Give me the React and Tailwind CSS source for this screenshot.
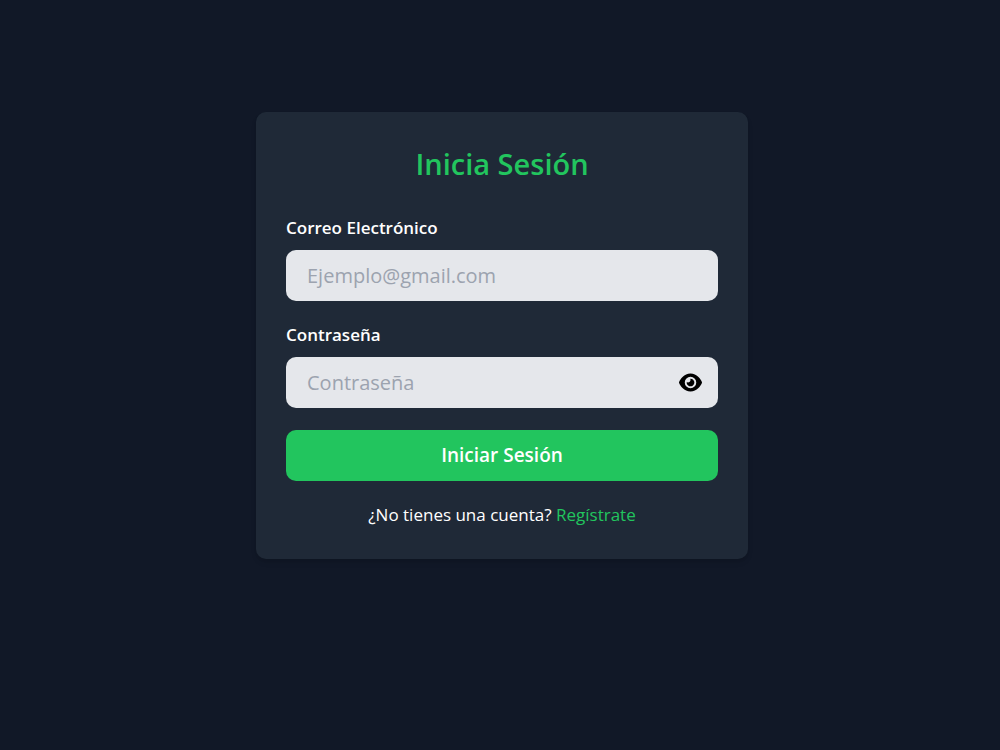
import React, { useState } from "react";
import { FaEye, FaEyeSlash } from "react-icons/fa6";

const inputStyles =
  "w-full h-[51px] px-[21px] rounded-[10px] bg-[#e5e7eb] text-gray-900 text-[20px] placeholder:text-[#9ca3af] focus:outline-none focus:ring-2 focus:ring-[#22c55e]";

const Login = () => {
  const [email, setEmail] = useState("");
  const [password, setPassword] = useState("");
  const [showPassword, setShowPassword] = useState(false);

  const handleSubmit = (e) => {
    e.preventDefault();
  };

  return (
    <div className="min-h-screen bg-[#111827] pl-5 pr-4 pt-28 pb-12 font-['Open_Sans','Noto_Sans',sans-serif]">
      <div className="w-full max-w-[492px] mx-auto px-[30px] pt-8 pb-[30px] rounded-[10px] bg-[#1f2937] shadow-md">
        <h1 className="mb-[30px] text-center text-[29px] leading-10 font-semibold text-[#22c55e]">
          Inicia Sesión
        </h1>

        <form onSubmit={handleSubmit}>
          {/* Email */}
          <label htmlFor="email" className="block mb-2 text-[17px] leading-7 font-semibold text-white">
            Correo Electrónico
          </label>
          <input
            id="email"
            type="email"
            placeholder="Ejemplo@gmail.com"
            value={email}
            onChange={(e) => setEmail(e.target.value)}
            className={inputStyles}
          />

          {/* Password */}
          <label htmlFor="password" className="block mt-5 mb-2 text-[17px] leading-7 font-semibold text-white">
            Contraseña
          </label>
          <div className="relative">
            <input
              id="password"
              type={showPassword ? "text" : "password"}
              placeholder="Contraseña"
              value={password}
              onChange={(e) => setPassword(e.target.value)}
              className={inputStyles}
            />
            <button
              type="button"
              aria-label="Mostrar contraseña"
              onClick={() => setShowPassword(!showPassword)}
              className="absolute inset-y-0 right-4 flex items-center text-black"
            >
              {showPassword ? <FaEyeSlash size={23} /> : <FaEye size={23} />}
            </button>
          </div>

          <button
            type="submit"
            className="w-full h-[51px] mt-[22px] rounded-[10px] bg-[#22c55e] text-[19px] font-semibold text-white hover:bg-green-600 transition"
          >
            Iniciar Sesión
          </button>
        </form>

        <p className="mt-5 text-center text-[17px] leading-7 text-white">
          ¿No tienes una cuenta?{" "}
          <a href="/register" className="text-[#22c55e] hover:underline">
            Regístrate
          </a>
        </p>
      </div>
    </div>
  );
};

export default function App() {
  return <Login />;
}
